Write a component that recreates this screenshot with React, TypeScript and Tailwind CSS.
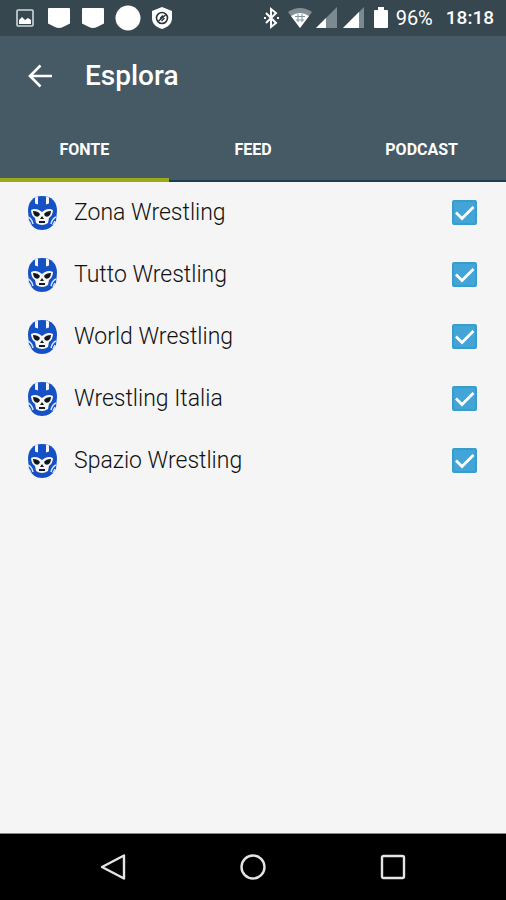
import { useState } from "react";

const sources = ["Zona Wrestling", "Tutto Wrestling", "World Wrestling", "Wrestling Italia", "Spazio Wrestling"];
const tabs = ["FONTE", "FEED", "PODCAST"];

function StatusBar() {
  return (
    <div className="flex h-9 items-center justify-between bg-[#37474f] pr-3 pl-4 text-white">
      <div className="flex items-center">
        <svg className="mr-3 h-6 w-[19px]" viewBox="0 0 19 24" aria-hidden="true">
          <rect x="1" y="4" width="16" height="16" rx="1" fill="none" stroke="#cfd8dc" strokeWidth="1.6" />
          <path d="M3 18v-4l3-3 3 3 3-2 3 2v4z" fill="#fff" />
        </svg>
        {[0, 1].map((item) => (
          <svg key={item} className="mr-[10px] h-6 w-6" viewBox="0 0 24 24" aria-hidden="true">
            <path d="M2 2h20q1 0 1 1v14q0 1-1 1l-6 3q-4 2-8 0l-6-3q-1 0-1-1V3q0-1 1-1z" fill="#fff" />
          </svg>
        ))}
        <svg className="mr-[11px] h-[26px] w-[26px]" viewBox="0 0 26 26" aria-hidden="true">
          <circle cx="13" cy="13" r="12.5" fill="#fff" />
        </svg>
        <svg className="h-6 w-5" viewBox="0 0 20 24" aria-hidden="true">
          <path d="M10 1l10 4v7c0 6-4 9-10 11C4 21 0 18 0 12V5z" fill="#fff" />
          <circle cx="10" cy="12" r="5.500" fill="none" stroke="#26353c" strokeWidth="1.600" />
          <path d="M6.500 15l7-6M8 12.500l3-3M9.500 15l3-3" fill="none" stroke="#26353c" strokeWidth="1.400" />
        </svg>
      </div>
      <div className="flex items-center">
        <svg className="mr-[9px] h-6 w-[15px]" viewBox="0 0 15 24" aria-hidden="true">
          <path d="M2 7l10 10-5 4V3l5 4L2 17" fill="none" stroke="#fff" strokeWidth="2" />
          <path d="M0 12h2M13 12h2" stroke="#fff" strokeWidth="2" />
        </svg>
        <svg className="mr-1 h-6 w-6" viewBox="0 0 24 24" aria-hidden="true">
          <path d="M0 6q12-8 24 0L12 22z" fill="#829095" />
          <path d="M3 10q9-6 18 0L12 22z" fill="#fff" />
          <path d="M10 8v8M14 8v8M7 10.500h10M8 14h8" stroke="#84939a" strokeWidth="1" />
        </svg>
        <svg className="mr-[6px] h-6 w-[21px]" viewBox="0 0 21 24" aria-hidden="true">
          <path d="M21 1v21H0z" fill="#7b8a90" />
          <path d="M10 12v10H0z" fill="#fff" />
        </svg>
        <svg className="mr-[10px] h-6 w-[21px]" viewBox="0 0 21 24" aria-hidden="true">
          <path d="M21 1v21H0z" fill="#7b8a90" />
          <path d="M16 6v16H0z" fill="#fff" />
        </svg>
        <svg className="mr-[8px] h-6 w-[14px]" viewBox="0 0 14 24" aria-hidden="true">
          <path d="M4 1h6v3h3q1 0 1 1v16q0 1-1 1H1q-1 0-1-1V5q0-1 1-1h3z" fill="#fff" />
        </svg>
        <span className="mr-[13px] text-[20px] leading-6">96%</span>
        <time className="text-[19px] leading-6 font-medium">18:18</time>
      </div>
    </div>
  );
}

function Mask() {
  return (
    <svg className="h-[34px] w-[30px] shrink-0" viewBox="0 0 30 34" aria-hidden="true">
      <path d="M15 0C25 0 30 6 30 15L29 25Q24 34 15 34T2 25L1 15C1 6 6 0 15 0z" fill="#1550c4" />
      <path d="M8 1.500l3-1v8l-3-1zM22 1.500l-3-1v8l3-1z" fill="#f5f5f5" />
      <path d="M4 14q4-2 8 0l3 2 3-2q4-2 8 0 0 5-4 8l-1 5q-6 4-12 0l-1-5q-4-3-4-8z" fill="#f5f5f5" />
      <path d="M6 15q5 0 7 3-1 4-5 2-2-2-2-5zM24 15q-5 0-7 3 1 4 5 2 2-2 2-5z" fill="#11151c" />
      <path d="M15 20l2 3h-4zM12 25h6v2h-6z" fill="#171b20" />
      <path d="M1 21q4 2 5 7M29 21q-4 2-5 7M2 25l2 4M28 25l-2 4" fill="none" stroke="#d5e3fa" strokeWidth="1.500" />
    </svg>
  );
}

function SourceRow({ name }: { name: string }) {
  const [checked, setChecked] = useState(true);
  return (
    <li>
      <label className="flex h-[62px] items-center pr-[29px] pl-[27px]">
        <Mask />
        <span className="ml-[17px] flex-1 text-[23px] leading-7 font-light text-[#111]">{name}</span>
        <span className="grid size-[26px] justify-end">
          <input
            type="checkbox"
            checked={checked}
            onChange={() => setChecked(!checked)}
            className="peer col-start-1 row-start-1 size-[25px] appearance-none rounded-xs border-2 border-[#379dcc] checked:bg-[#43a5d7]"
          />
          <svg className="pointer-events-none invisible col-start-1 row-start-1 size-[25px] peer-checked:visible" viewBox="0 0 25 25" aria-hidden="true">
            <path d="M4 12.500l6 6L21.500 7" fill="none" stroke="#fff" strokeWidth="2.700" />
          </svg>
        </span>
      </label>
    </li>
  );
}

export default function App() {
  const [active, setActive] = useState(0);
  return (
    <div className="flex min-h-screen flex-col bg-[#f5f5f5] font-['Roboto',sans-serif]">
      <StatusBar />
      <header className="bg-[#455a64] text-white">
        <div className="flex h-20 items-center pl-7">
          <button type="button" aria-label="Indietro" className="mr-[33px]">
            <svg className="size-6" viewBox="0 0 24 24" aria-hidden="true">
              <path d="M12.500 1.500L2 12l10.500 10.500M2 12h22" fill="none" stroke="#fff" strokeWidth="2.600" />
            </svg>
          </button>
          <h1 className="text-[28px] leading-8 font-medium">Esplora</h1>
        </div>
        <div role="tablist" className="grid grid-cols-3">
          {tabs.map((tab, index) => (
            <button
              key={tab}
              type="button"
              role="tab"
              aria-selected={active === index}
              onClick={() => setActive(index)}
              className="h-[66px] border-b-2 border-[#1d3e4e] pt-1 text-base font-bold aria-selected:border-b-4 aria-selected:border-[#9aaa16] aria-selected:pt-[6px]"
            >
              {tab}
            </button>
          ))}
        </div>
      </header>
      <main className="flex-1">
        <ul>
          {sources.map((name) => (
            <SourceRow key={name} name={name} />
          ))}
        </ul>
      </main>
      <nav aria-label="Sistema" className="flex h-[67px] items-center justify-center gap-[114px] border-t border-[#888] bg-black">
        <button type="button" aria-label="Indietro">
          <svg className="size-[26px]" viewBox="0 0 26 26" aria-hidden="true">
            <path d="M2 13L24 1.500v23z" fill="none" stroke="#e5e5e5" strokeWidth="2.400" strokeLinejoin="round" />
          </svg>
        </button>
        <button type="button" aria-label="Home">
          <svg className="size-[26px]" viewBox="0 0 26 26" aria-hidden="true">
            <circle cx="13" cy="13" r="11.500" fill="none" stroke="#e5e5e5" strokeWidth="2.400" />
          </svg>
        </button>
        <button type="button" aria-label="Recenti">
          <svg className="size-[26px]" viewBox="0 0 26 26" aria-hidden="true">
            <rect x="2" y="2" width="22" height="22" rx="1.500" fill="none" stroke="#e5e5e5" strokeWidth="2.400" />
          </svg>
        </button>
      </nav>
    </div>
  );
}
